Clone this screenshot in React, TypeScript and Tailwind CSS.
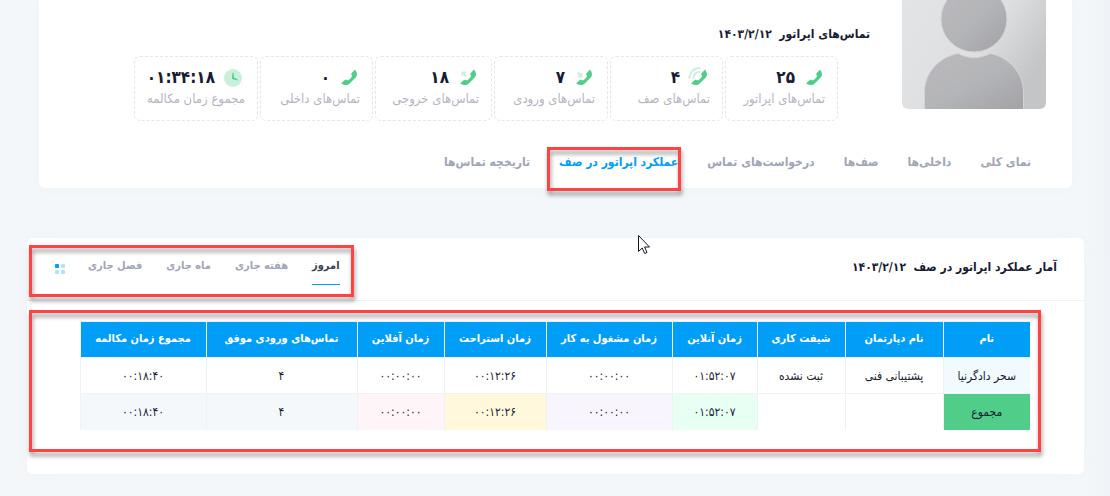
import type { ReactNode } from "react";

type StatKind = "plain" | "queue" | "incoming" | "outgoing" | "clock";

const PHONE =
  "M13.08,14.784 L15.284,12.58 C15.893,11.971 16.044,11.041 15.659,10.271 L15.534,10.022 C15.149,9.252 15.3,8.322 15.908,7.713 L18.641,4.98 C18.836,4.785 19.153,4.785 19.348,4.98 C19.386,5.018 19.418,5.062 19.442,5.11 L20.546,7.318 C21.39,9.007 21.059,11.047 19.724,12.383 L13.725,18.381 C12.272,19.835 10.122,20.342 8.172,19.692 L5.757,18.888 C5.495,18.8 5.354,18.517 5.441,18.255 C5.465,18.181 5.507,18.115 5.562,18.06 L8.213,15.408 C8.822,14.8 9.752,14.649 10.522,15.034 L10.771,15.159 C11.541,15.544 12.471,15.393 13.08,14.784 Z";

function StatIcon({ kind }: { kind: StatKind }) {
  if (kind === "clock") {
    return (
      <svg viewBox="0 0 24 24" className="size-6 shrink-0" fill="#50cd89" aria-hidden="true">
        <circle cx="12" cy="13" r="9" opacity="0.3" />
        <path d="M11.963,7.5 L12.048,7.5 C12.304,7.5 12.519,7.695 12.545,7.95 L13,12.5 L16.248,14.356 C16.404,14.445 16.5,14.611 16.5,14.79 L16.5,15 C16.5,15.211 16.329,15.382 16.118,15.382 L11.399,14.109 C11.167,14.046 11.013,13.827 11.032,13.588 L11.464,7.962 C11.485,7.701 11.702,7.5 11.963,7.5 Z" />
      </svg>
    );
  }
  return (
    <svg viewBox="0 0 24 24" className="size-6 shrink-0" fill="#50cd89" aria-hidden="true">
      {kind === "queue" && (
        <path
          opacity="0.3"
          d="M14.148,6.007 L13.957,7.998 C12.478,7.856 11.01,8.369 9.939,9.439 C8.872,10.506 8.359,11.969 8.497,13.443 L6.505,13.628 C6.313,11.568 7.033,9.517 8.525,8.025 C10.022,6.528 12.081,5.808 14.148,6.007 Z M14.498,2.022 L14.313,4.014 C11.662,3.767 9.03,4.692 7.111,6.611 C5.194,8.527 4.27,11.155 4.513,13.802 L2.521,13.985 C2.225,10.752 3.356,7.538 5.697,5.197 C8.041,2.852 11.261,1.727 14.498,2.022 Z"
        />
      )}
      {kind === "incoming" && (
        <path opacity="0.3" d="M6 8 L7.400 6.600 L9.600 8.800 L11.500 7 V12.500 H6 L8 10.400 Z" />
      )}
      {kind === "outgoing" && (
        <path opacity="0.3" d="M6.500 6.500 H12 L10 8.400 L12.100 10.600 L10.600 12 L8.400 9.900 L6.500 12 Z" />
      )}
      <path d={PHONE} />
    </svg>
  );
}

const stats: { kind: StatKind; value: string; label: string; width: string }[] = [
  { kind: "plain", value: "۲۵", label: "تماس‌های اپراتور", width: "w-[113px]" },
  { kind: "queue", value: "۴", label: "تماس‌های صف", width: "w-[113px]" },
  { kind: "incoming", value: "۷", label: "تماس‌های ورودی", width: "w-[114px]" },
  { kind: "outgoing", value: "۱۸", label: "تماس‌های خروجی", width: "w-[117px]" },
  { kind: "plain", value: "۰", label: "تماس‌های داخلی", width: "w-[113px]" },
  { kind: "clock", value: "۰۱:۳۴:۱۸", label: "مجموع زمان مکالمه", width: "w-[124px]" },
];

const tabs = ["نمای کلی", "داخلی‌ها", "صف‌ها", "درخواست‌های تماس", "عملکرد اپراتور در صف", "تاریخچه تماس‌ها"];
const periods = ["امروز", "هفته جاری", "ماه جاری", "فصل جاری"];

const columns = [
  { title: "نام", value: "سحر دادگرنیا", total: "مجموع", width: "w-[87px]", tint: "bg-[#50cd89]" },
  { title: "نام دپارتمان", value: "پشتیبانی فنی", total: "", width: "w-[98px]", tint: "" },
  { title: "شیفت کاری", value: "ثبت نشده", total: "", width: "w-[88px]", tint: "" },
  { title: "زمان آنلاین", value: "۰۱:۵۲:۰۷", total: "۰۱:۵۲:۰۷", width: "w-[85px]", tint: "bg-[#e8fff3]" },
  { title: "زمان مشغول به کار", value: "۰۰:۰۰:۰۰", total: "۰۰:۰۰:۰۰", width: "w-[126px]", tint: "bg-[#f8f5ff]" },
  { title: "زمان استراحت", value: "۰۰:۱۲:۲۶", total: "۰۰:۱۲:۲۶", width: "w-[102px]", tint: "bg-[#fff8dd]" },
  { title: "زمان آفلاین", value: "۰۰:۰۰:۰۰", total: "۰۰:۰۰:۰۰", width: "w-[87px]", tint: "bg-[#fff5f8]" },
  { title: "تماس‌های ورودی موفق", value: "۴", total: "۴", width: "w-[151px]", tint: "bg-[#f5f8fa]" },
  { title: "مجموع زمان مکالمه", value: "۰۰:۱۸:۴۰", total: "۰۰:۱۸:۴۰", width: "w-[126px]", tint: "bg-[#f5f8fa]" },
];

function Marker({ className }: { className: string }) {
  return (
    <span
      aria-hidden="true"
      className={`pointer-events-none absolute border-3 border-[#ff4343] drop-shadow-[1px_4px_2px_rgba(0,0,0,0.4)] ${className}`}
    />
  );
}

function Card({ className, children }: { className: string; children: ReactNode }) {
  return <section className={`bg-white shadow-[0_0_20px_rgba(76,87,125,0.02)] ${className}`}>{children}</section>;
}

export default function App() {
  return (
    <div
      dir="rtl"
      className="min-h-screen overflow-hidden bg-[linear-gradient(to_left,#eff2f6_0,#f3f7fa_24px)] pb-6 font-['DejaVu_Sans_Condensed','DejaVu_Sans',sans-serif] text-[#181c32]"
    >
      <Card className="mr-[38px] ml-[39px] rounded-b-md pr-[26px]">
        <div className="flex gap-8">
          <svg viewBox="0 0 144 109" className="h-[109px] w-36 shrink-0 rounded-b-md" role="img" aria-label="اپراتور">
            <defs>
              <linearGradient id="backdrop" x1="0" y1="0" x2="1" y2="0.5">
                <stop offset="0" stopColor="#e3e4e5" />
                <stop offset="0.6" stopColor="#dedfe0" />
                <stop offset="1" stopColor="#c4c5c7" />
              </linearGradient>
              <linearGradient id="figure" x1="0" y1="0" x2="1" y2="1">
                <stop offset="0" stopColor="#bbb8bc" />
                <stop offset="0.5" stopColor="#b4b5b8" />
                <stop offset="1" stopColor="#a2a2a7" />
              </linearGradient>
            </defs>
            <rect width="144" height="109" fill="url(#backdrop)" />
            <circle cx="72" cy="19" r="33" fill="url(#figure)" stroke="#d2d3d5" />
            <path
              d="M22.500 110 V92 C22.500 73 37 57 56 53.500 C66 59 78 59 88 53.500 C107 57 121.500 73 121.500 92 V110 Z"
              fill="url(#figure)"
              stroke="#d2d3d5"
            />
          </svg>
          <div className="min-w-0 flex-1 pt-6">
            <h2 className="text-xs leading-5 font-bold whitespace-pre">{"تماس‌های اپراتور  ۱۴۰۳/۲/۱۲"}</h2>
            <div className="mt-3 flex gap-0.5 pr-8">
              {stats.map((s) => (
                <div key={s.label} className={`h-[65px] shrink-0 rounded-md border border-dashed border-[#e4e6ef] px-3 pt-2 ${s.width}`}>
                  <div className="flex h-6 items-center gap-1.5">
                    <StatIcon kind={s.kind} />
                    <span className="text-[17px] leading-6 font-bold">{s.value}</span>
                  </div>
                  <div className="text-[13px] leading-5 whitespace-nowrap text-[#b5b5c3]">{s.label}</div>
                </div>
              ))}
            </div>
          </div>
        </div>
        <nav className="mt-[27px] flex gap-[29px] pr-[15px] pb-3">
          {tabs.map((t, i) => (
            <a
              key={t}
              href="#"
              className={`relative text-xs leading-7 font-bold whitespace-nowrap ${i === 4 ? "text-[#009ef7]" : "text-[#a1a5b7]"}`}
            >
              {t}
              {i === 4 && <Marker className="-top-px -right-[3px] -bottom-[15px] -left-3" />}
            </a>
          ))}
        </nav>
      </Card>

      <Card className="mt-[50px] mr-[26px] ml-[27px] rounded-md pb-11">
        <header className="flex h-[63px] items-center justify-between border-b border-[#eff2f5] pr-[27px] pb-1 pl-[21px]">
          <h2 className="text-xs leading-5 font-bold whitespace-pre">{"آمار عملکرد اپراتور در صف  ۱۴۰۳/۲/۱۲"}</h2>
          <div className="relative flex items-center gap-4">
            <div className="flex gap-6">
              {periods.map((p, i) => (
                <button
                  key={p}
                  type="button"
                  className={`h-9 cursor-pointer border-b text-[11px] font-bold whitespace-nowrap ${i === 0 ? "border-b-[#009ef7] text-[#3f4254]" : "border-b-transparent text-[#a1a5b7]"}`}
                >
                  {p}
                </button>
              ))}
            </div>
            <button type="button" aria-label="بیشتر" className="cursor-pointer">
              <svg viewBox="0 0 24 24" className="size-6" fill="#009ef7" aria-hidden="true">
                <rect x="7" y="9" width="4" height="4" rx="1" />
                <rect x="13" y="9" width="4" height="4" rx="1" opacity="0.3" />
                <rect x="7" y="15" width="4" height="4" rx="1" opacity="0.3" />
                <rect x="13" y="15" width="4" height="4" rx="1" opacity="0.3" />
              </svg>
            </button>
            <Marker className="-top-1 -right-[14px] -bottom-3 -left-[19px]" />
          </div>
        </header>
        <div className="relative mt-5 pr-[54px] pl-[53px]">
          <table className="w-full table-fixed border-collapse text-center text-xs">
            <thead className="bg-[#009ef7] text-white">
              <tr>
                {columns.map((c) => (
                  <th key={c.title} className={`h-9 border border-[#eff2f5] text-[11px] font-bold whitespace-nowrap first:border-r-0 ${c.width}`}>
                    {c.title}
                  </th>
                ))}
              </tr>
            </thead>
            <tbody>
              <tr>
                {columns.map((c) => (
                  <td key={c.title} className="h-9 border border-[#eff2f5] whitespace-nowrap first:border-r-0 first:bg-[#f1faff]">
                    {c.value}
                  </td>
                ))}
              </tr>
              <tr>
                {columns.map((c) => (
                  <td key={c.title} className={`h-9 border-x border-[#eff2f5] whitespace-nowrap first:border-r-0 ${c.tint}`}>
                    {c.total}
                  </td>
                ))}
              </tr>
            </tbody>
          </table>
          <Marker className="-top-[11px] right-[43px] -bottom-[22px] left-0.5" />
        </div>
      </Card>

      <svg viewBox="0 0 12 20" className="absolute top-[235px] left-[638px] h-5 w-3" aria-hidden="true">
        <path d="M0.500 0.500 V16.500 L4.200 13 L6.700 18.500 L9 17.500 L6.600 12 H11.500 Z" fill="#fff" stroke="#111827" strokeWidth="1" />
      </svg>
    </div>
  );
}
